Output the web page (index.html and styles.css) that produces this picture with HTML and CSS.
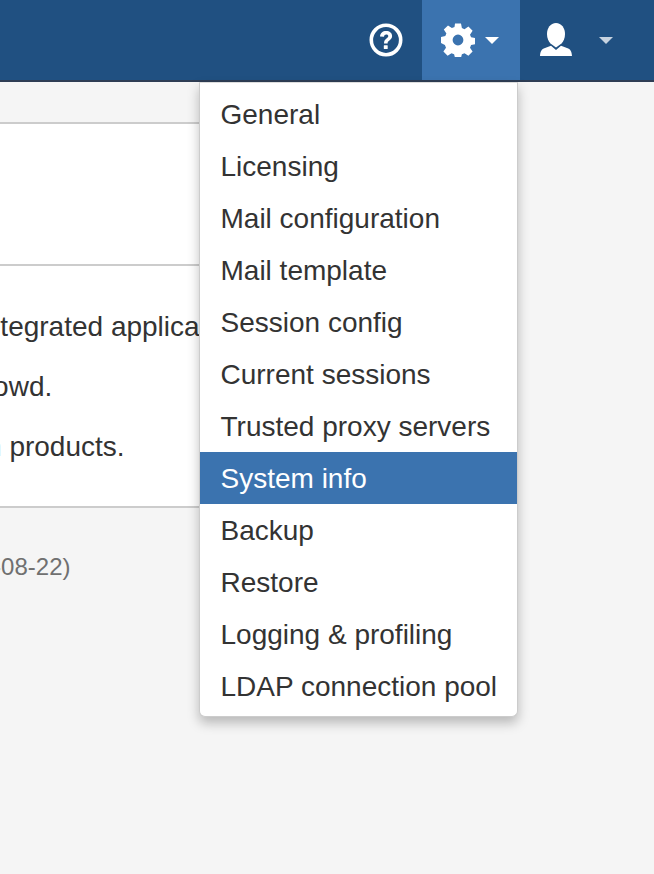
FILE: index.html
```html
<!DOCTYPE html>
<html lang="en">
<head>
    <meta charset="UTF-8">
    <meta name="viewport" content="width=device-width, initial-scale=1.0">
    <title>Administration</title>
    <link rel="stylesheet" href="styles.css">
</head>
<body>

    <header class="navbar">
        <a class="nav-item nav-help" href="#">
            <svg class="icon-help" width="34" height="34" viewBox="0 0 34 34">
                <circle cx="17" cy="17" r="14.7" fill="none" stroke="#fff" stroke-width="3.6"/>
                <path d="M11 13.600c.2-3.600 2.700-5.600 6.200-5.600 3.400 0 5.900 2 5.900 5 0 2.100-1.100 3.300-2.700 4.400-1.400 1-1.800 1.500-1.800 3h-3.600c0-2.600.8-3.800 2.500-5 1.300-.9 1.800-1.400 1.800-2.300 0-1-.8-1.600-2-1.600-1.300 0-2.100.8-2.300 2.200z" fill="#fff"/>
                <rect x="14.800" y="22.300" width="3.900" height="3.700" rx=".5" fill="#fff"/>
            </svg>
        </a>
        <a class="nav-item nav-settings" href="#">
            <svg class="icon-gear" width="34" height="34" viewBox="0 0 34 34">
                <path fill="#fff" fill-rule="evenodd" d="M14 .5h6l.9 4.600 2.600 1.100 3.900-2.600 4.200 4.200-2.600 3.900 1.100 2.600 4.400.9v6l-4.400.9-1.100 2.600 2.600 3.900-4.200 4.200-3.900-2.600-2.600 1.100-.9 3.400h-6l-.9-3.400-2.600-1.100-3.900 2.600-4.200-4.200 2.600-3.900-1.100-2.600L-.1 20v-6l4.400-.9 1.100-2.600-2.600-3.900 4.200-4.200 3.900 2.600 2.600-1.100zM17 11.600a5.400 5.400 0 1 0 0 10.800 5.400 5.400 0 0 0 0-10.800z"/>
            </svg>
            <span class="caret"></span>
        </a>
        <a class="nav-item nav-user" href="#">
            <svg class="icon-user" width="32" height="34" viewBox="0 0 32 34">
                <path fill="#fff" d="M16 0C21.500 0 25 5 25 11C25 15 23.500 18.500 21.500 20.500L16 24.500L10.500 20.500C8.500 18.500 7 15 7 11C7 5 10.500 0 16 0z"/>
                <path fill="#fff" d="M0 33C.3 28.500 1.500 26 5 25L11 22.800L16 27L21 22.800L27 25C30.500 26 31.700 28.500 32 33z"/>
            </svg>
            <span class="caret caret-dim"></span>
        </a>
    </header>

    <main class="content">
        <section class="panel">
            <div class="panel-top"></div>
            <div class="panel-text">
                <p class="line-apps">Integrated applications</p>
                <p class="line-crowd">in Crowd.</p>
                <p class="line-products">Atlassian products.</p>
            </div>
        </section>
        <p class="version">Version (2016-08-22)</p>
    </main>

    <ul class="dropdown">
        <li><a href="#">General</a></li>
        <li><a href="#">Licensing</a></li>
        <li><a href="#">Mail configuration</a></li>
        <li><a href="#">Mail template</a></li>
        <li><a href="#">Session config</a></li>
        <li><a href="#">Current sessions</a></li>
        <li><a href="#">Trusted proxy servers</a></li>
        <li class="active"><a href="#">System info</a></li>
        <li><a href="#">Backup</a></li>
        <li><a href="#">Restore</a></li>
        <li><a href="#">Logging &amp; profiling</a></li>
        <li><a href="#">LDAP connection pool</a></li>
    </ul>

</body>
</html>
```

FILE: styles.css
```css
html, body {
    height: 100%;
}

body {
    font-family: 'Liberation Sans', Arial, sans-serif;
    font-size: 28px;
    background-color: #f5f5f5;
    color: #333;
    margin: 0;
    padding: 0;
    overflow: hidden;
}

.navbar {
    display: flex;
    justify-content: flex-end;
    height: 80px;
    padding-right: 20px;
    background-color: #205081;
    border-bottom: 2px solid #2e3d54;
}

.nav-item {
    display: flex;
    align-items: center;
    height: 80px;
    box-sizing: border-box;
}

.nav-help {
    width: 70px;
    padding-left: 17px;
}

.nav-settings {
    width: 98px;
    padding-left: 19px;
    background-color: #3b73af;
}

.nav-user {
    width: 114px;
    padding-left: 20px;
}

.caret {
    width: 0;
    height: 0;
    margin-left: 10px;
    border-left: 7px solid transparent;
    border-right: 7px solid transparent;
    border-top: 7px solid #fff;
}

.caret-dim {
    margin-left: 27px;
    border-top-color: #c7d3e0;
}

.content {
    width: 200px;
    margin-top: 40px;
}

.panel {
    background: white;
    border-top: 2px solid #ccc;
    border-bottom: 2px solid #ccc;
}

.panel-top {
    height: 140px;
    border-bottom: 2px solid #ccc;
}

.panel-text {
    height: 240px;
    overflow: hidden;
    white-space: nowrap;
}

.panel-text p {
    margin: 0;
    height: 60px;
    line-height: 60px;
}

/* the window crops these lines on the left */
.panel-text .line-apps {
    margin-top: 31px;
    margin-left: -23px;
}

.panel-text .line-crowd {
    margin-left: -66px;
}

.panel-text .line-products {
    margin-left: -112px;
}

.version {
    margin: 42px 0 0 -155px;
    font-size: 24px;
    line-height: 34px;
    color: #707070;
    white-space: nowrap;
}

.dropdown {
    position: absolute;
    top: 82px;
    left: 199px;
    width: 317px;
    margin: 0;
    padding: 5px 0 4px;
    list-style: none;
    background: white;
    border: 1px solid #ccc;
    border-top: 1px solid #ddd;
    border-radius: 0 0 6px 6px;
    box-shadow: 0 6px 12px rgba(0, 0, 0, 0.25);
}

.dropdown a {
    display: block;
    height: 52px;
    padding: 0 20px 0 20.5px;
    line-height: 54px;
    color: #333;
    text-decoration: none;
    white-space: nowrap;
}

.dropdown .active a {
    background-color: #3b73af;
    color: white;
}
```
